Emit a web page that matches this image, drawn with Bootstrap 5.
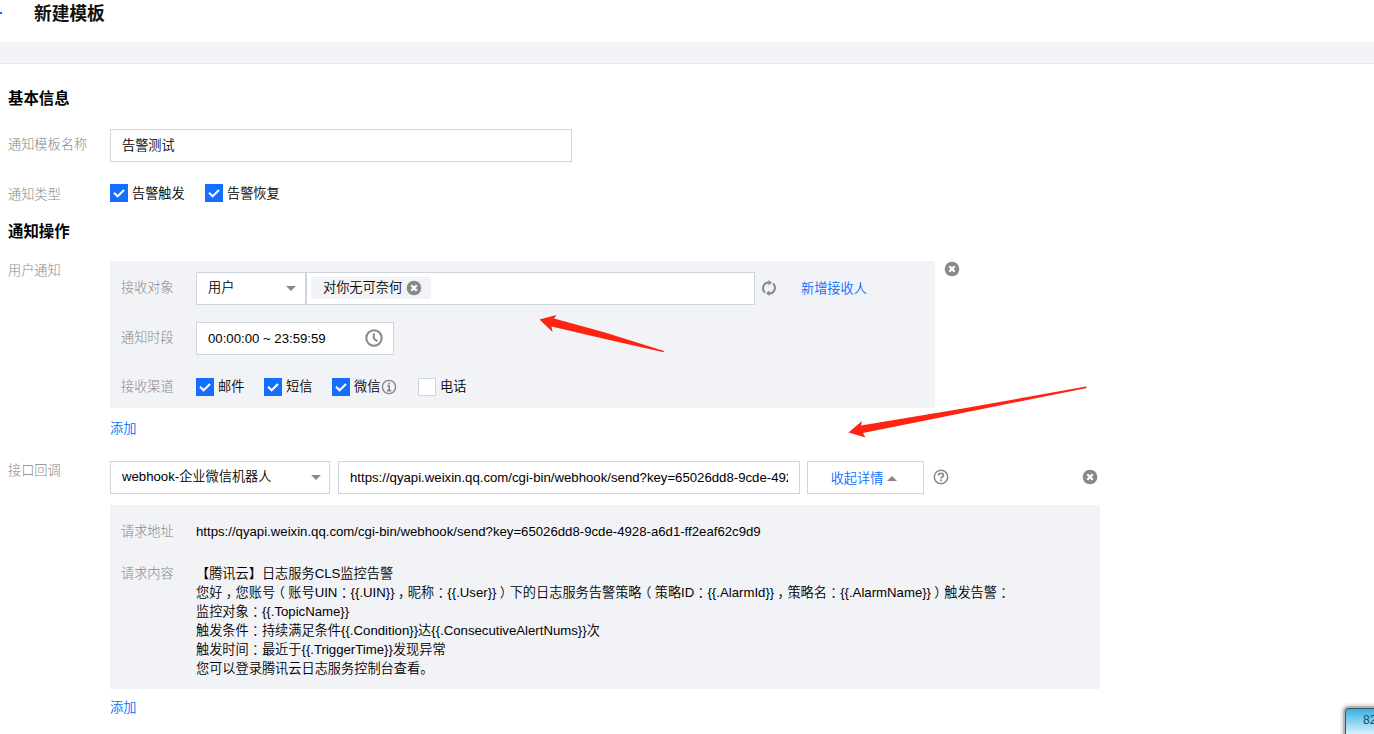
<!DOCTYPE html>
<html lang="zh-CN">
<head>
<meta charset="utf-8">
<meta name="viewport" content="width=device-width, initial-scale=1">
<title>新建模板</title>
<link href="https://cdn.jsdelivr.net/npm/bootstrap@5.3.0/dist/css/bootstrap.min.css" rel="stylesheet">
<style>
  body { font: 350 13.2px/19px "Liberation Sans", "Noto Sans CJK SC", sans-serif; color: #000; width: 1374px; height: 734px; }
  a { color: #006eff; text-decoration: none; }
  svg { display: block; flex: none; }
  .page-head { height: 42px; padding-left: 34px; }
  .page-head h1 { font-size: 17.7px; line-height: 28px; color: #111; }
  .back-arrow { left: 0; top: 11px; }
  .band { height: 22px; background: #f2f3f7; border-bottom: 1px solid #e7e9ef; }
  .page-body { padding-left: 8px; }
  .section-title { font-size: 15.4px; line-height: 20px; margin: 0; }
  .lbl { width: 102px; color: #888; font-weight: 300; flex: none; }
  .panel { background: #f2f3f7; padding-left: 11px; }
  .panel .lbl { width: 75px; }
  .box { height: 33px; border: 1px solid #cfd5de; border-radius: 0; background: #fff; padding: 0 11px; font-size: 13.2px; font-weight: 350; line-height: 31px; color: #000; flex: none; }
  input.box { line-height: normal; }
  .form-check-input.tick { width: 18px; height: 18px; margin: 0 4px 0 0; float: none; border-radius: 0; border: 1px solid #cfd5de; flex: none; }
  .form-check-input.tick:checked { background-color: #146eff; border-color: #146eff; background-size: 18px 18px; background-image: url("data:image/svg+xml,%3csvg xmlns='http://www.w3.org/2000/svg' viewBox='0 0 18 18'%3e%3cpath fill='none' stroke='%23fff' stroke-width='2' d='M4 8.8l3.6 3.5L14 6'/%3e%3c/svg%3e"); }
  .caret { width: 0; border: 5px solid transparent; border-top-color: #888; border-bottom: 0; }
  .caret.up { border-top: 0; border-bottom: 5px solid #888; }
  .chip { background: #f2f3f7; height: 22px; width: 120px; padding-left: 12px; line-height: 22px; }
  .body-text { line-height: 19px; white-space: nowrap; }
  .pc { font-feature-settings: "halt"; padding: 0 3.3px; }
  .marks { left: 0; top: 0; pointer-events: none; }
  .speed { right: 0; bottom: 0; width: 29px; height: 26px; padding-left: 17px; font-size: 12px; line-height: 23px; color: #174a66; border-left: 1px solid #456; border-top: 1px solid #456; border-top-left-radius: 4px; background: linear-gradient(#38b0e0, #d8f2fc); box-shadow: 0 0 0 2px #b4b4b4, 0 0 3px 4px #ddd; white-space: nowrap; }
</style>
</head>
<body class="position-relative overflow-hidden bg-white">
<svg width="0" height="0" class="position-absolute">
  <symbol id="i-close" viewBox="0 0 16 16"><circle cx="8" cy="8" r="7.3" fill="#888"/><path d="M5.3 5.3l5.4 5.4M10.7 5.3l-5.4 5.4" stroke="#fff" stroke-width="2.3"/></symbol>
</svg>

<header class="page-head bg-white">
  <svg class="back-arrow position-absolute" width="3" height="4"><path d="M0 2h2" stroke="#006eff" stroke-width="2"/></svg>
  <h1 class="fw-bold m-0">新建模板</h1>
</header>
<div class="band"></div>

<main class="page-body">
  <h2 class="section-title fw-bold" style="padding-top:25px">基本信息</h2>
  <div class="d-flex" style="margin-top:20px">
    <div class="lbl" style="padding-top:6px">通知模板名称</div>
    <input class="form-control box" style="width:462px;padding-bottom:2px" value="告警测试">
  </div>
  <div class="d-flex align-items-center" style="margin-top:21px;height:20px">
    <div class="lbl" style="padding-top:2px">通知类型</div>
    <label class="d-flex align-items-center" style="width:95px"><input type="checkbox" class="form-check-input tick" checked>告警触发</label>
    <label class="d-flex align-items-center"><input type="checkbox" class="form-check-input tick" checked>告警恢复</label>
  </div>
  <h2 class="section-title fw-bold" style="margin-top:19px">通知操作</h2>

  <div class="d-flex align-items-start" style="margin-top:19px">
    <div class="lbl">用户通知</div>
    <div class="panel" style="width:825px;height:147px;padding-top:11px">
      <div class="d-flex">
        <div class="lbl align-self-center" style="padding-bottom:2px">接收对象</div>
        <div class="box d-flex align-items-center justify-content-between" style="width:110px;padding-right:9px"><span style="padding-bottom:2px">用户</span><i class="caret"></i></div>
        <div class="box d-flex align-items-center" style="width:449px;padding:0 0 2px 4px"><span class="chip d-flex align-items-center">对你无可奈何<svg width="16" height="16" class="ms-1"><use href="#i-close"/></svg></span></div>
        <svg class="align-self-center" style="margin:0 0 2px 6px" width="16" height="16" viewBox="0 0 16 16" fill="none" stroke="#888" stroke-width="2"><path d="M4 12.4A5.600 5.600 0 0 1 7.800 2.600M12 3.600A5.600 5.600 0 0 1 8.200 13.400"/><path d="M7.400 0l3.600 2.800-3.600 2.800zM8.600 10.400L5 13.200 8.600 16z" fill="#888" stroke="none"/></svg>
        <a href="#" class="align-self-center" style="margin-left:24px">新增接收人</a>
      </div>
      <div class="d-flex" style="margin-top:17px">
        <div class="lbl align-self-center" style="padding-bottom:2px">通知时段</div>
        <div class="box d-flex align-items-center justify-content-between" style="width:198px;padding-right:10px"><span>00:00:00 ~ 23:59:59</span>
          <svg style="margin-bottom:1px" width="18" height="18" viewBox="0 0 18 18" fill="none" stroke="#888" stroke-width="2"><circle cx="9" cy="9" r="7.7"/><path d="M8.8 4.500v5l3.400 2.800"/></svg></div>
      </div>
      <div class="d-flex align-items-center" style="margin-top:22px;height:19px">
        <div class="lbl">接收渠道</div>
        <label class="d-flex align-items-center" style="width:68px"><input type="checkbox" class="form-check-input tick" checked>邮件</label>
        <label class="d-flex align-items-center" style="width:68px"><input type="checkbox" class="form-check-input tick" checked>短信</label>
        <label class="d-flex align-items-center" style="width:86px"><input type="checkbox" class="form-check-input tick" checked>微信
          <svg style="margin:1px 0 0 1px" width="16" height="16" viewBox="0 0 16 16" fill="none" stroke="#888"><circle cx="8" cy="8" r="6.600" stroke-width="1.400"/><path d="M6.300 7h1.900v4.500M6 11.600h4.200M8 3.600v2" stroke-width="1.600"/></svg></label>
        <label class="d-flex align-items-center"><input type="checkbox" class="form-check-input tick">电话</label>
      </div>
    </div>
    <svg style="margin-left:9px" width="16" height="16"><use href="#i-close"/></svg>
  </div>
  <div style="margin:11px 0 0 102px;height:19px"><a href="#">添加</a></div>

  <div class="d-flex align-items-start" style="margin-top:23px">
    <div class="lbl">接口回调</div>
    <div style="width:990px">
      <div class="d-flex align-items-center">
        <div class="box d-flex align-items-center justify-content-between" style="width:220px;padding-right:8px"><span style="padding-bottom:2px">webhook-企业微信机器人</span><i class="caret"></i></div>
        <input class="form-control box" style="width:462px;margin-left:8px" value="https://qyapi.weixin.qq.com/cgi-bin/webhook/send?key=65026dd8-9cde-4928-a6d1-ff2eaf62c9d9">
        <a href="#" class="box d-flex align-items-center justify-content-center" style="width:117px;margin-left:7px;padding:1px 14px 0 11px;color:#006eff">收起详情<i class="caret up ms-1"></i></a>
        <svg style="margin:0 0 1px 9px" width="16" height="16" viewBox="0 0 16 16" fill="none" stroke="#888"><circle cx="8" cy="8" r="6.700" stroke-width="1.500"/><path d="M5.500 6.600c0-3.200 5-3 5-.3 0 1.700-2.500 1.500-2.500 3.200M8 10.600v1.700" stroke-width="1.700"/></svg>
        <svg class="ms-auto" style="margin:0 2px 1px 0" width="16" height="16"><use href="#i-close"/></svg>
      </div>
      <div class="panel" style="height:184px;margin-top:11px;padding-top:17px">
        <div class="d-flex"><div class="lbl">请求地址</div><div>https://qyapi.weixin.qq.com/cgi-bin/webhook/send?key=65026dd8-9cde-4928-a6d1-ff2eaf62c9d9</div></div>
        <div class="d-flex" style="margin-top:23px"><div class="lbl">请求内容</div>
          <div class="body-text">【腾讯云】日志服务CLS监控告警<br>您好<span class="pc">，</span>您账号<span class="pc">（</span>账号UIN<span class="pc">：</span>{{.UIN}}<span class="pc">，</span>昵称<span class="pc">：</span>{{.User}}<span class="pc">）</span>下的日志服务告警策略<span class="pc">（</span>策略ID<span class="pc">：</span>{{.AlarmId}}<span class="pc">，</span>策略名<span class="pc">：</span>{{.AlarmName}}<span class="pc">）</span>触发告警<span class="pc">：</span><br>监控对象<span class="pc">：</span>{{.TopicName}}<br>触发条件<span class="pc">：</span>持续满足条件{{.Condition}}达{{.ConsecutiveAlertNums}}次<br>触发时间<span class="pc">：</span>最近于{{.TriggerTime}}发现异常<br>您可以登录腾讯云日志服务控制台查看。</div></div>
      </div>
    </div>
  </div>
  <div style="margin:9px 0 0 102px;height:19px"><a href="#">添加</a></div>
</main>

<svg class="marks position-absolute" width="1374" height="734" fill="#ff2412">
  <path d="M539.500 319.500L556.500 315 554 318.500 605 332.500 664 351 663.500 352.300 605 339 551.500 326.500 552.500 332z"/>
  <path d="M848.500 432.500L862 421 861 425.500 960 409 1086 386.500 1087 388 960 413.500 863 433 865.500 437.500z"/>
</svg>
<div class="speed position-absolute">82</div>
<script src="https://cdn.jsdelivr.net/npm/bootstrap@5.3.0/dist/js/bootstrap.bundle.min.js"></script>
</body>
</html>
